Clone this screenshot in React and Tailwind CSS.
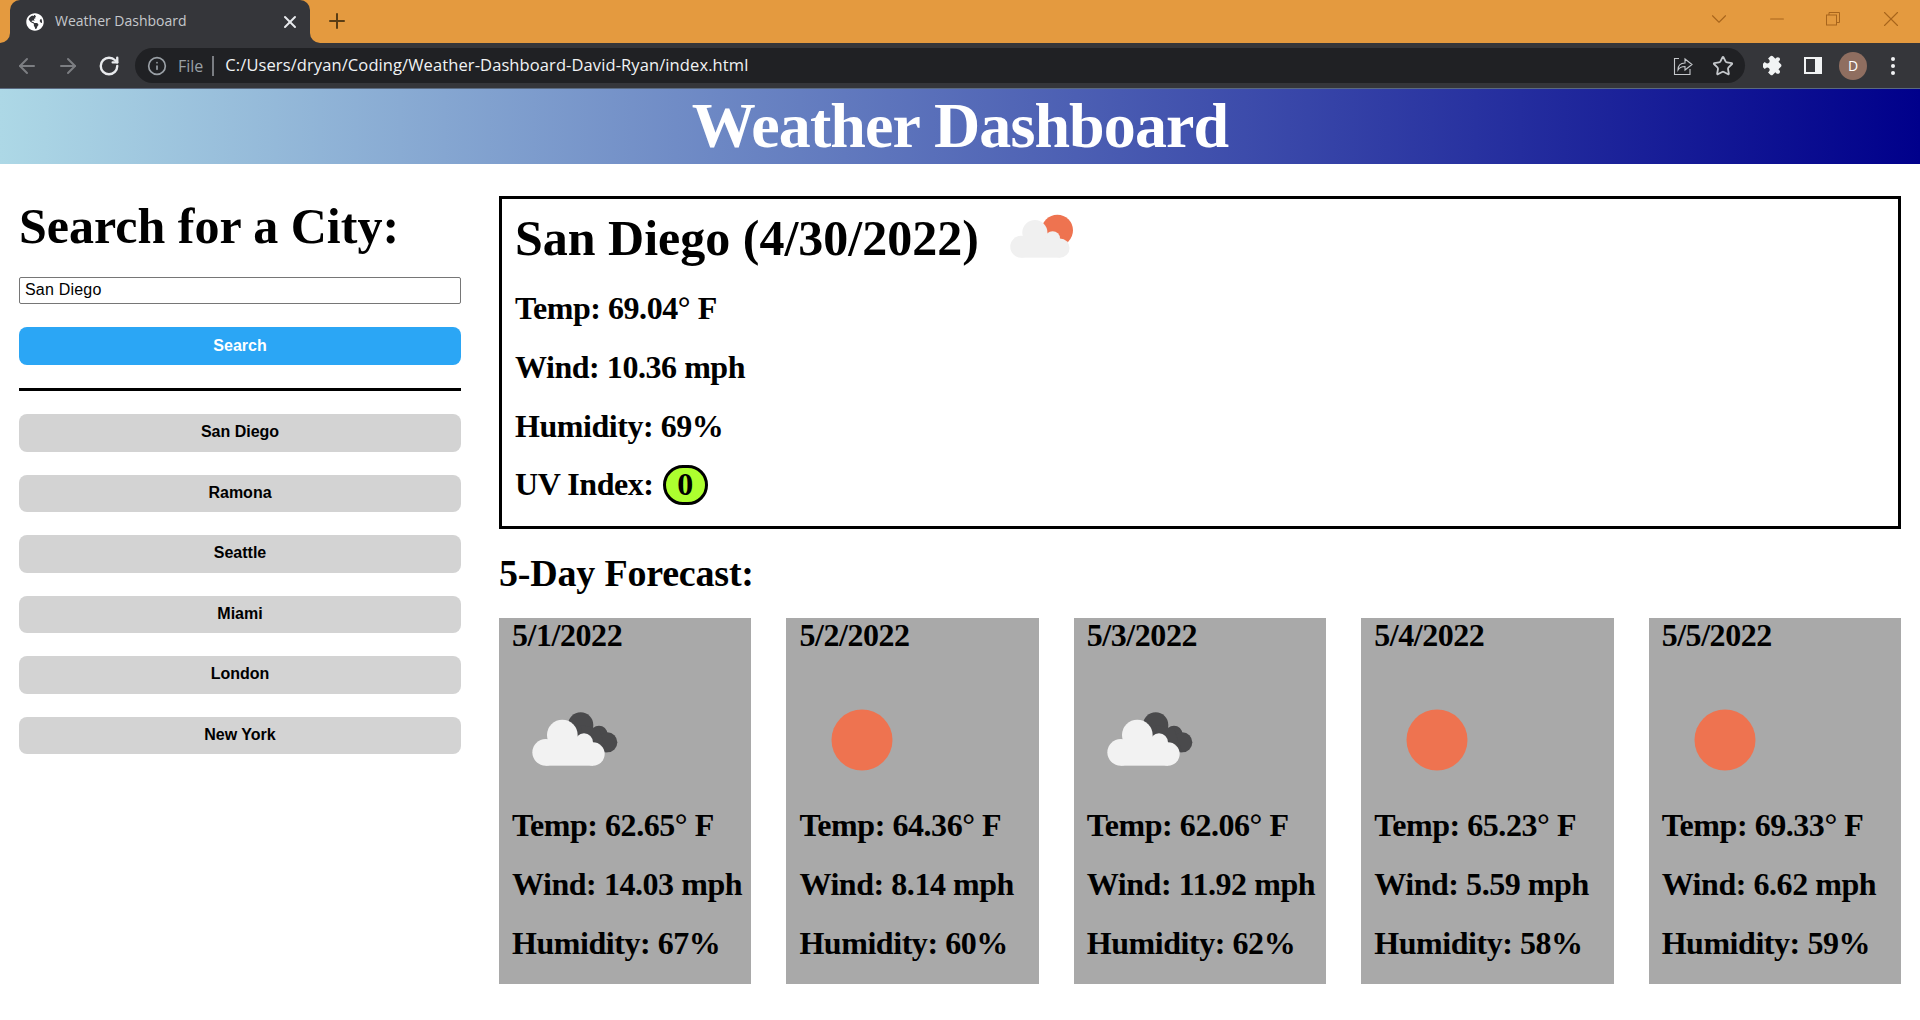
import { ArrowLeft, ArrowRight, RotateCw, Info, Plus, X, ChevronDown, Minus, Star } from 'lucide-react';
import { FaGlobeAmericas } from 'react-icons/fa';

const cities = ['San Diego', 'Ramona', 'Seattle', 'Miami', 'London', 'New York'];

const forecast = [
    { date: '5/1/2022', icon: 'clouds', temp: '62.65', wind: '14.03', humidity: '67' },
    { date: '5/2/2022', icon: 'sun', temp: '64.36', wind: '8.14', humidity: '60' },
    { date: '5/3/2022', icon: 'clouds', temp: '62.06', wind: '11.92', humidity: '62' },
    { date: '5/4/2022', icon: 'sun', temp: '65.23', wind: '5.59', humidity: '58' },
    { date: '5/5/2022', icon: 'sun', temp: '69.33', wind: '6.62', humidity: '59' },
];

const CloudShape = ({ fill }) => (
    <g fill={fill}>
        <circle cx="80" cy="160" r="40" />
        <circle cx="130" cy="108" r="46" />
        <circle cx="195" cy="130" r="27" />
        <circle cx="222" cy="165" r="35" />
        <rect x="80" y="130" width="142" height="70" />
    </g>
);

const WeatherIcon = ({ type }) => {
    if (type === 'sun') {
        return (
            <svg viewBox="0 0 126 126" className="w-[126px] h-[126px]">
                <circle cx="63" cy="63" r="30.5" fill="#ee7350" />
            </svg>
        );
    }
    return (
        <svg viewBox="0 0 126 126" className="w-[126px] h-[126px]">
            <svg x="7" y="22" width="110" height="80" viewBox="0 0 330 240">
                <g fill="#4a4a4c">
                    <circle cx="185" cy="78" r="38" />
                    <circle cx="240" cy="105" r="25" />
                    <circle cx="265" cy="130" r="30" />
                    <path d="M185 78 L240 90 L265 160 L200 160 Z" />
                </g>
                <CloudShape fill="#f2f2f2" />
            </svg>
        </svg>
    );
};

const BrowserChrome = () => (
    <div className="shrink-0 font-['Open_Sans',sans-serif]">
        <div className="h-[43px] bg-[#e49a3f] flex items-end pl-[10px]">
            {/* Active tab */}
            <div className="relative w-[300px] h-[43px] bg-[#35363a] rounded-t-[10px] flex items-center pl-[16px] text-[#dee1e6]">
                <div className="absolute right-full bottom-0 w-[10px] h-[10px] bg-[#35363a]">
                    <div className="w-full h-full bg-[#e49a3f] rounded-br-[10px]" />
                </div>
                <div className="absolute left-full bottom-0 w-[10px] h-[10px] bg-[#35363a]">
                    <div className="w-full h-full bg-[#e49a3f] rounded-bl-[10px]" />
                </div>
                <FaGlobeAmericas className="w-[18px] h-[18px] text-white shrink-0" />
                <span className="ml-[11px] text-[14px] flex-1 text-[#c5c8cc] pb-[2px]">Weather Dashboard</span>
                <X className="w-[20px] h-[20px] mr-[10px] text-[#e8eaed]" strokeWidth={2.4} />
            </div>
            <Plus className="w-[24px] h-[24px] text-[#5a3d14] ml-[15px] mb-[10px]" strokeWidth={2} />
            <div className="ml-auto flex items-center h-[38px] self-start text-[#a8651c]">
                <div className="w-[62px] flex justify-center"><ChevronDown className="w-[26px] h-[26px]" strokeWidth={1} /></div>
                <div className="w-[54px] flex justify-center"><Minus className="w-[22px] h-[22px]" strokeWidth={1.1} /></div>
                <div className="w-[58px] flex justify-center">
                    <svg viewBox="0 0 14 14" className="w-[14px] h-[14px]" fill="none" stroke="currentColor">
                        <rect x="0.5" y="3" width="10" height="10" />
                        <path d="M3 3V0.5H13.5V10.5H10.5" />
                    </svg>
                </div>
                <div className="w-[58px] flex justify-center"><X className="w-[26px] h-[26px]" strokeWidth={1} /></div>
            </div>
        </div>
        <div className="h-[46px] bg-[#35363a] flex items-center border-b border-[#5a6a80]">
            <div className="flex items-center pl-[15px] gap-[17px]">
                <ArrowLeft className="w-[24px] h-[24px] text-[#7c7e82]" strokeWidth={2} />
                <ArrowRight className="w-[24px] h-[24px] text-[#7c7e82]" strokeWidth={2} />
                <RotateCw className="w-[22px] h-[22px] ml-[1px] text-[#e8eaed]" strokeWidth={2.6} />
            </div>
            <div className="ml-[15px] w-[1610px] h-[35px] rounded-full bg-[#202124] flex items-center pl-[12px] pr-[11px]">
                <Info className="w-[20px] h-[20px] text-[#9aa0a6]" strokeWidth={2} />
                <span className="ml-[11px] text-[16px] text-[#9aa0a6]">File</span>
                <span className="ml-[9px] w-[2px] h-[20px] bg-[#7a7d82]" />
                <span className="ml-[11px] text-[16.5px] text-[#f1f3f4] tracking-[0.1px]">C:/Users/dryan/Coding/Weather-Dashboard-David-Ryan/index.html</span>
                <div className="ml-auto flex items-center gap-[20px] text-[#c5c8cc]">
                    <svg viewBox="0 0 20 20" className="w-[20px] h-[20px] translate-x-[1px]" fill="none" stroke="currentColor" strokeWidth="1.1">
                        <path d="M6 2.5H1.5V18.5H17V13" />
                        <path d="M5 14C5 9 8 7 12 7V3L19 8.5L12 14V10.5C9 10.5 6.5 11.5 5 14Z" />
                    </svg>
                    <Star className="w-[22px] h-[22px]" strokeWidth={2} />
                </div>
            </div>
            <div className="ml-[18px] flex items-center text-[#f1f3f4]">
                <svg viewBox="0 0 24 24" className="w-[21px] h-[21px]" fill="currentColor">
                    <path transform="rotate(45 12 12)" d="M20.5 11H19V7c0-1.1-.9-2-2-2h-4V3.5C13 2.12 11.88 1 10.5 1S8 2.12 8 3.5V5H4c-1.1 0-1.99.9-1.99 2v3.8H3.5c1.49 0 2.7 1.21 2.7 2.7s-1.21 2.7-2.7 2.7H2V20c0 1.1.9 2 2 2h3.8v-1.5c0-1.49 1.21-2.7 2.7-2.7 1.49 0 2.7 1.21 2.7 2.7V22H17c1.1 0 2-.9 2-2v-4h1.5c1.38 0 2.5-1.12 2.5-2.5S21.88 11 20.5 11z" />
                </svg>
                <div className="ml-[20px] w-[18px] h-[17px] border-[2px] border-r-[7px] border-[#f1f3f4]" />
                <div className="ml-[17px] w-[28px] h-[28px] rounded-full bg-[#8f6e60] flex items-center justify-center text-[14px] text-white">D</div>
                <div className="ml-[24px] flex flex-col gap-[3px]">
                    <span className="w-[4px] h-[4px] rounded-full bg-[#f1f3f4]" />
                    <span className="w-[4px] h-[4px] rounded-full bg-[#f1f3f4]" />
                    <span className="w-[4px] h-[4px] rounded-full bg-[#f1f3f4]" />
                </div>
            </div>
        </div>
    </div>
);

export default function App() {
    return (
        <div className="w-[1920px] h-[1020px] overflow-hidden bg-white flex flex-col font-['Liberation_Serif',serif] text-black">
            <BrowserChrome />

            {/* Header */}
            <header className="h-[75px] shrink-0 bg-[linear-gradient(to_right,#add8e6,#00008b)] flex items-center justify-center">
                <h1 className="text-[64px] font-bold text-white leading-none tracking-[-0.9px] -mt-[2px]">Weather Dashboard</h1>
            </header>

            <main className="flex flex-1 pt-[32px] pr-[19px]">
                {/* Sidebar */}
                <aside className="w-[499px] shrink-0 pl-[19px] pr-[38px]">
                    <h2 className="text-[50px] font-bold leading-[55px] mt-[3px]">Search for a City:</h2>
                    <input
                        readOnly
                        value="San Diego"
                        className="mt-[22.5px] block w-full h-[27px] border border-[#767676] rounded-[2px] px-[5px] text-[16px] tracking-[0.2px] font-['Liberation_Sans',sans-serif] outline-none"
                    />
                    <button className="mt-[23.5px] block w-full h-[38px] rounded-[8px] bg-[#2ba6f5] text-white font-bold text-[16px] font-['Liberation_Sans',sans-serif]">Search</button>
                    <div className="mt-[23px] h-[3px] bg-black" />
                    <div className="mt-[23px] flex flex-col gap-[23px]">
                        {cities.map((city) => (
                            <button key={city} className="block w-full h-[37.5px] pb-[1px] rounded-[8px] bg-[#d3d3d3] font-bold text-[16px] font-['Liberation_Sans',sans-serif]">{city}</button>
                        ))}
                    </div>
                </aside>

                {/* Results */}
                <section className="flex-1 min-w-0">
                    <div className="h-[333px] border-[3px] border-black px-[13px] pt-[12px]">
                        <div className="flex items-start h-[55px]">
                            <h2 className="text-[50px] font-bold leading-[55px]">San Diego (4/30/2022)</h2>
                            <svg viewBox="0 0 270 210" className="ml-[21px] mt-[-6px] w-[90px] h-[70px] shrink-0">
                                <circle cx="172" cy="76" r="47" fill="#ee7350" />
                                <g transform="translate(-2 -6) scale(0.82)"><CloudShape fill="#f0f0f0" /></g>
                            </svg>
                        </div>
                        <p className="mt-[23.5px] text-[32px] font-bold leading-[37px] tracking-[-0.45px]">Temp: 69.04° F</p>
                        <p className="mt-[22px] text-[32px] font-bold leading-[37px] tracking-[-0.45px]">Wind: 10.36 mph</p>
                        <p className="mt-[22px] text-[32px] font-bold leading-[37px] tracking-[-0.45px]">Humidity: 69%</p>
                        <p className="mt-[20px] text-[32px] font-bold leading-[37px] tracking-[-0.45px] flex items-center">
                            UV Index:
                            <span className="ml-[9px] w-[45px] h-[40px] rounded-full border-[3px] border-black bg-[#adff2f] flex items-center justify-center">0</span>
                        </p>
                    </div>

                    <h3 className="mt-[22px] text-[38px] font-bold leading-[44px] tracking-[-0.2px]">5-Day Forecast:</h3>

                    <div className="mt-[23px] flex gap-[35px]">
                        {forecast.map((day) => (
                            <div key={day.date} className="flex-1 min-w-0 h-[366px] bg-[#a9a9a9] px-[13px]">
                                <p className="text-[32px] font-bold leading-[35px] tracking-[-0.45px]">{day.date}</p>
                                <div className="mt-[24px] h-[126px]">
                                    <WeatherIcon type={day.icon} />
                                </div>
                                <p className="mt-[4px] text-[32px] font-bold leading-[37px] tracking-[-0.45px] whitespace-nowrap">Temp: {day.temp}° F</p>
                                <p className="mt-[22px] text-[32px] font-bold leading-[37px] tracking-[-0.45px] whitespace-nowrap">Wind: {day.wind} mph</p>
                                <p className="mt-[22px] text-[32px] font-bold leading-[37px] tracking-[-0.45px] whitespace-nowrap">Humidity: {day.humidity}%</p>
                            </div>
                        ))}
                    </div>
                </section>
            </main>
        </div>
    );
}
